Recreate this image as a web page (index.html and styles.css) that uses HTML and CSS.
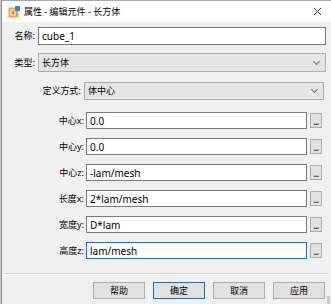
FILE: index.html
```html
<!DOCTYPE html>
<html lang="zh-CN">
<head>
  <meta charset="UTF-8" />
  <title>属性 - 编辑元件 - 长方体</title>
  <link rel="stylesheet" href="styles.css">
</head>
<body>
  <div class="window">
    <div class="titlebar">
      <svg class="app-icon" width="12" height="12" viewBox="0 0 12 12">
        <rect x="0.5" y="1.5" width="10" height="10" fill="#f3a23a"/>
        <rect x="2.5" y="3.5" width="5" height="6" fill="#fff"/>
        <rect x="3.5" y="4.5" width="3" height="4" fill="#e8862a"/>
        <rect x="7" y="0" width="5" height="5" fill="#3b7dd8"/>
      </svg>
      <span class="title">属性 - 编辑元件 - 长方体</span>
      <svg class="close" width="9" height="9" viewBox="0 0 9 9">
        <path d="M1 1 L8 8 M8 1 L1 8" stroke="#3c3c3c" stroke-width="1"/>
      </svg>
    </div>

    <div class="content">
      <div class="row row-name">
        <span class="label">名称:</span>
        <div class="field input">cube_1</div>
      </div>
      <div class="row row-type">
        <span class="label">类型:</span>
        <div class="field select">长方体<span class="chevron"></span></div>
      </div>
      <div class="row row-mode">
        <span class="label">定义方式:</span>
        <div class="field select">体中心<span class="chevron"></span></div>
      </div>

      <div class="row param">
        <span class="label">中心x:</span>
        <div class="field input">0.0</div>
        <div class="dots">...</div>
      </div>
      <div class="row param">
        <span class="label">中心y:</span>
        <div class="field input">0.0</div>
        <div class="dots">...</div>
      </div>
      <div class="row param">
        <span class="label">中心z:</span>
        <div class="field input">-lam/mesh</div>
        <div class="dots">...</div>
      </div>
      <div class="row param">
        <span class="label">长度x:</span>
        <div class="field input">2*lam/mesh</div>
        <div class="dots">...</div>
      </div>
      <div class="row param">
        <span class="label">宽度y:</span>
        <div class="field input">D*lam</div>
        <div class="dots">...</div>
      </div>
      <div class="row param">
        <span class="label">高度z:</span>
        <div class="field input focused">lam/mesh</div>
        <div class="dots">...</div>
      </div>
    </div>

    <div class="separator"></div>

    <div class="buttons">
      <div class="btn">帮助</div>
      <div class="btn default">确定</div>
      <div class="btn">取消</div>
      <div class="btn">应用</div>
    </div>
    <div class="grip"></div>
  </div>
</body>
</html>
```

FILE: styles.css
```css
html, body {
  margin: 0;
  height: 100%;
}
body {
  background: #c9c9c9;
  font-family: "Noto Sans", "Noto Sans CJK SC", sans-serif;
  font-size: 9px;
  color: #000;
  overflow: hidden;
}
.window {
  position: relative;
  height: 100%;
  margin-left: 1px;
  border-left: 1px solid #8d8d8d;
  background: #f0f0f0;
  box-sizing: border-box;
}
.titlebar {
  height: 22px;
  box-sizing: border-box;
  border-top: 1px solid #a9a9a9;
  background: #fff;
  display: flex;
  align-items: center;
  padding-left: 6px;
}
.app-icon {
  flex: none;
  margin-right: 4px;
}
.title {
  flex: 1;
  line-height: 12px;
}
.close {
  flex: none;
  margin-right: 9px;
}

.content {
  padding-top: 5px;
  display: flex;
  flex-direction: column;
}
.row {
  display: flex;
  align-items: center;
}
.label {
  flex: none;
  text-align: right;
  white-space: nowrap;
  line-height: 12px;
}
.field {
  flex: 1;
  box-sizing: border-box;
  display: flex;
  align-items: center;
  padding-left: 3px;
  line-height: 12px;
  white-space: nowrap;
}
.input {
  background: #fff;
  border: 1px solid #7a7a7a;
  font-size: 10px;
}
.input.focused {
  border-color: #0078d7;
}
.select {
  background: #e5e5e5;
  border: 1px solid #adadad;
  position: relative;
}
.chevron {
  position: absolute;
  right: 6px;
  top: 50%;
  width: 4px;
  height: 4px;
  margin-top: -4px;
  border-right: 1px solid #6a6a6a;
  border-bottom: 1px solid #6a6a6a;
  transform: rotate(45deg);
}

.row-name {
  margin-right: 5px;
}
.row-name .label,
.row-type .label {
  width: 33px;
  margin-right: 3px;
}
.row-name .field {
  height: 18px;
}
.row-type {
  margin-top: 8px;
  margin-right: 5px;
}
.row-type .field {
  height: 19px;
}
.row-mode {
  margin-top: 10px;
  margin-right: 7px;
}
.row-mode .label {
  width: 79px;
  margin-right: 3px;
}
.row-mode .field {
  height: 18px;
}
.param {
  margin-top: 9px;
  margin-right: 9px;
}
.row-mode + .param {
  margin-top: 12px;
}
.param .label {
  width: 82px;
  margin-right: 2px;
}
.param .field {
  height: 17px;
}
.dots {
  flex: none;
  width: 12px;
  height: 15px;
  margin-left: 3px;
  box-sizing: border-box;
  background: #e1e1e1;
  border: 1px solid #adadad;
  font-size: 8px;
  font-weight: bold;
  line-height: 15px;
  text-align: center;
  letter-spacing: -0.5px;
  color: #333;
}

.separator {
  margin: 14px 3px 0 3px;
  height: 1px;
  background: #d0d0d0;
  border-bottom: 1px solid #fafafa;
}
.buttons {
  margin-top: 7px;
  display: flex;
  justify-content: flex-end;
  gap: 8px;
  padding-right: 6px;
}
.btn {
  width: 52px;
  height: 17px;
  box-sizing: border-box;
  background: #e1e1e1;
  border: 1px solid #adadad;
  text-align: center;
  line-height: 15px;
}
.btn.default {
  border-color: #0078d7;
}
.grip {
  position: absolute;
  right: 1px;
  bottom: 0;
  width: 3px;
  height: 8px;
  background: radial-gradient(circle, #9a9a9a 0.6px, transparent 0.8px) 0 0 / 2px 2px;
}
```
